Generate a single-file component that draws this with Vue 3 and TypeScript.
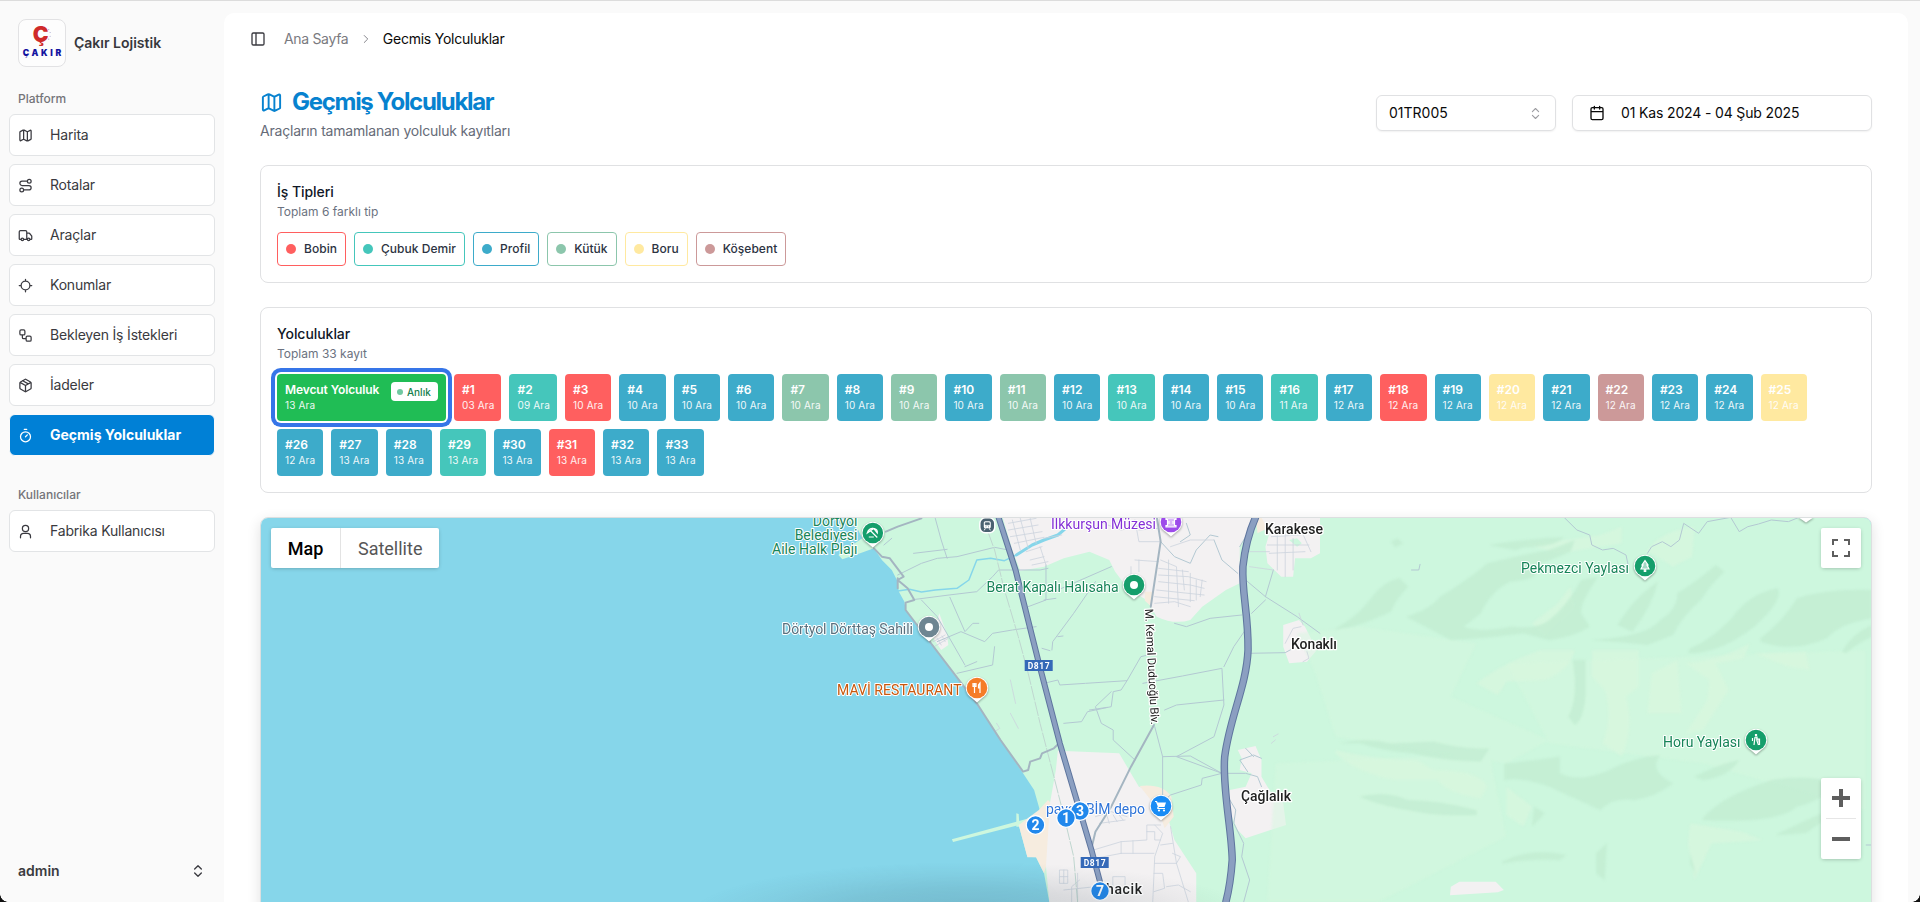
<script setup lang="ts">
interface NavItem { label: string; icon: string; active?: boolean }
interface JobType { name: string; color: string }
interface Trip { no: number; date: string; color: string }
interface Place { x: number; y: number; color: string; text: string; label: string; width: number; labelX: number; icon: string }

const icons: Record<string, string> = {
  map: 'M14.106 5.553a2 2 0 0 0 1.788 0l3.659-1.83A1 1 0 0 1 21 4.619v12.764a1 1 0 0 1-.553.894l-4.553 2.277a2 2 0 0 1-1.788 0l-4.212-2.106a2 2 0 0 0-1.788 0l-3.659 1.83A1 1 0 0 1 3 19.381V6.618a1 1 0 0 1 .553-.894l4.553-2.277a2 2 0 0 1 1.788 0zM15 5.764v15M9 3.236v15',
  route: 'M9 19a3 3 0 1 1-6 0a3 3 0 1 1 6 0M9 19h8.5a3.5 3.5 0 0 0 0-7h-11a3.5 3.5 0 0 1 0-7H15M21 5a3 3 0 1 1-6 0a3 3 0 1 1 6 0',
  truck: 'M14 18V6a2 2 0 0 0-2-2H4a2 2 0 0 0-2 2v11a1 1 0 0 0 1 1h2M15 18H9M19 18h2a1 1 0 0 0 1-1v-3.65a1 1 0 0 0-.22-.624l-3.48-4.35A1 1 0 0 0 17.52 8H14M19 18a2 2 0 1 1-4 0a2 2 0 1 1 4 0M9 18a2 2 0 1 1-4 0a2 2 0 1 1 4 0',
  locate: 'M2 12h3M19 12h3M12 2v3M12 19v3M19 12a7 7 0 1 1-14 0a7 7 0 1 1 14 0',
  workflow: 'M5 3h4a2 2 0 0 1 2 2v4a2 2 0 0 1-2 2H5a2 2 0 0 1-2-2V5a2 2 0 0 1 2-2zM7 11v4a2 2 0 0 0 2 2h4M15 13h4a2 2 0 0 1 2 2v4a2 2 0 0 1-2 2h-4a2 2 0 0 1-2-2v-4a2 2 0 0 1 2-2z',
  box: 'M11 21.73a2 2 0 0 0 2 0l7-4A2 2 0 0 0 21 16V8a2 2 0 0 0-1-1.73l-7-4a2 2 0 0 0-2 0l-7 4A2 2 0 0 0 3 8v8a2 2 0 0 0 1 1.73zM12 22V12M3.3 7L12 12l8.7-5M7.5 4.27l9 5.15',
  timer: 'M10 2h4M12 14l3-3M20 14a8 8 0 1 1-16 0a8 8 0 1 1 16 0',
  user: 'M17 7a5 5 0 1 1-10 0a5 5 0 1 1 10 0M20 22v-2a5 5 0 0 0-5-5H9a5 5 0 0 0-5 5v2',
  panel: 'M5 3h14a2 2 0 0 1 2 2v14a2 2 0 0 1-2 2H5a2 2 0 0 1-2-2V5a2 2 0 0 1 2-2zM9 3v18',
  chevron: 'm9 18 6-6-6-6',
  upDown: 'm7 15 5 5 5-5M7 9l5-5 5 5',
  calendar: 'M8 2v4M16 2v4M5 4h14a2 2 0 0 1 2 2v14a2 2 0 0 1-2 2H5a2 2 0 0 1-2-2V6a2 2 0 0 1 2-2zM3 10h18',
}

const platform: NavItem[] = [
  { label: 'Harita', icon: 'map' },
  { label: 'Rotalar', icon: 'route' },
  { label: 'Araçlar', icon: 'truck' },
  { label: 'Konumlar', icon: 'locate' },
  { label: 'Bekleyen İş İstekleri', icon: 'workflow' },
  { label: 'İadeler', icon: 'box' },
  { label: 'Geçmiş Yolculuklar', icon: 'timer', active: true },
]

const red = '#ff5f5f'
const teal = '#45c6bb'
const blue = '#3dabca'
const green = '#8cc6ac'
const yellow = '#ffe9a0'
const rose = '#cc9999'

const jobTypes: JobType[] = [
  { name: 'Bobin', color: red },
  { name: 'Çubuk Demir', color: teal },
  { name: 'Profil', color: blue },
  { name: 'Kütük', color: green },
  { name: 'Boru', color: yellow },
  { name: 'Köşebent', color: rose },
]

const special: Record<number, string> = {
  1: red, 2: teal, 3: red, 7: green, 9: green, 11: green, 13: teal, 16: teal,
  18: red, 20: yellow, 22: rose, 25: yellow, 29: teal, 31: red,
}
function dateOf(n: number): string {
  if (n === 1) return '03 Ara'
  if (n === 2) return '09 Ara'
  if (n <= 15) return '10 Ara'
  if (n === 16) return '11 Ara'
  return n <= 26 ? '12 Ara' : '13 Ara'
}
const trips: Trip[] = Array.from({ length: 33 }, (_, i) => ({
  no: i + 1, date: dateOf(i + 1), color: special[i + 1] ?? blue,
}))

const places: Place[] = [
  { x: 1171, y: 522, color: '#9d4bea', text: '#8430d6', label: 'İlkkurşun Müzesi', width: 105, labelX: 1156, icon: 'M-5-4h10v1.500h-1.500v6h1.500v1.500h-10v-1.500h1.500v-6h-1.500zM-2-1v3M2-1v3' },
  { x: 1134, y: 585, color: '#159e6b', text: '#168458', label: 'Berat Kapalı Halısaha', width: 132, labelX: 1118.500, icon: 'dot' },
  { x: 929, y: 627, color: '#6e8592', text: '#58707e', label: 'Dörtyol Dörttaş Sahili', width: 131, labelX: 913, icon: 'dot' },
  { x: 977, y: 688, color: '#f57c28', text: '#c9580e', label: 'MAVİ RESTAURANT', width: 124.500, labelX: 961.500, icon: 'M-4-5v3.500h3V-5M-2.500-5V5M3 5V0h-1.500v-3l1.500-2z' },
  { x: 1645, y: 566, color: '#159e6b', text: '#168458', label: 'Pekmezci Yaylası', width: 108, labelX: 1629, icon: 'M0-5.500L3-1H2L4 3H.700v2.500H-.700V3H-4l2-4h-1z' },
  { x: 1756, y: 740, color: '#159e6b', text: '#168458', label: 'Horu Yaylası', width: 77.500, labelX: 1740.500, icon: 'M-.500-5.500h1v1h-1zM-1-3h2v4l1.500 4M-1-3l-1 8M-3.500-2v3M1-1h2.500v6' },
]

const stops = [
  { n: 3, x: 1080, y: 811 },
  { n: 2, x: 1035.5, y: 825 },
  { n: 1, x: 1066, y: 818 },
  { n: 7, x: 1100, y: 891 },
]

const towns = [
  { x: 1294, y: 534, w: 58, name: 'Karakese' },
  { x: 1314, y: 649, w: 46, name: 'Konaklı' },
  { x: 1266, y: 801, w: 50, name: 'Çağlalık' },
  { x: 1124, y: 894, w: 36, name: 'hacik' },
]

const minorRoads: string[] = [
  'M465 105L485 85M500 195L560 160L600 145L650 140L745 112L780 120M540 130L625 118M595 25L610 90L625 145',
  'M545 268L630 255L700 245L740 200L755 180L860 180L880 175M632 262L670 365L690 340L705 340M560 270L600 320L670 465M600 395L660 365L720 395L740 370L790 360L850 350',
  'M650 490L740 465L745 410M670 470L700 455M875 165L875 270L830 290M870 270L900 265M880 245L905 240L1040 170',
  'M870 520L905 510L910 525L975 520L1080 512L1115 440L1150 430M1080 512L1065 540L1045 545L1040 590L980 605L965 635L920 640M985 600L1030 592',
  'M1040 545L1000 590L1015 640L1045 660L1045 690L1100 750M1120 520L1220 498L1320 475L1325 585L1300 680L1205 740L1320 790',
  'M1150 650L1170 740L1170 870M1170 740L1240 738L1320 790L1270 805L1268 825L1190 855L1175 870',
  'M890 420L892 395L945 310L1000 215M905 380L918 378M865 415L885 422M1175 600L1205 585L1325 570M1200 340L1230 350L1290 325L1370 315',
  'M1375 205L1430 260L1510 320L1568 370M1430 270L1395 310M1385 430L1480 428L1500 415M1325 470L1350 410L1385 350M1430 260L1450 180',
  'M1165 95L1200 140L1240 160L1255 120L1290 75L1310 80M1230 40L1240 75L1215 95M1300 90L1320 150L1360 190M1365 110L1390 60',
  'M1320 790L1380 790L1410 800L1420 830M1385 785L1365 750L1400 735L1420 745M1380 715L1400 740M1330 850L1355 900L1350 940L1375 1000L1370 1040L1390 1110L1375 1176',
]

const streets: string[] = [
  'M780 40L850 25M780 60L855 45M785 80L865 65M795 100L870 82M790 30L810 120M810 25L830 115M835 25L850 100M870 85L915 75M825 125L865 110M835 150L870 140M840 165L880 155M860 110L875 165',
  'M910 1080H930V1120H910ZM920 1080V1120M910 1100H930M1045 1100H1075V1135H1045ZM940 1176V1130L960 1110M920 1140L1000 1130L1030 1145M955 1090V1176',
  'M995 1020L1065 995L1130 990V945H1165M1065 995V1030M1095 992V1030M1065 1030L1148 1030M1000 1045L1065 1030M1130 965H1150V990H1165M1150 945L1170 970L1150 1040L1145 1176M1190 950L1205 1060L1235 1176M1165 1005L1195 1000M1150 1060H1205M1205 1060L1215 1040L1195 1030M1148 1090L1170 1090L1175 1135L1148 1145M1180 1130L1210 1125L1240 1145',
  'M1000 920L1040 905L1080 920M1010 940L1075 930M1030 920L1035 940M1045 915L1055 935M1060 915L1070 930',
  'M1165 150L1205 170L1210 290M1185 150V280M1220 180L1225 240M1160 175L1235 185M1160 195L1235 200L1280 215M1160 215L1240 225L1275 235M1155 240L1275 255M1150 260L1250 272M1240 190V275M1255 210V270M1270 210L1265 260M1150 280L1200 275L1240 290',
  'M1100 150L1160 155M1090 170V195M1110 150V185M1100 30L1110 95L1165 95M1110 60L1160 55M1190 110L1240 90L1300 90M1020 40L1065 60L1110 50',
  'M1445 80L1520 75M1435 105H1540M1440 130L1530 125M1460 60V180M1480 60V200M1500 85V180M1520 60L1545 125M1375 125H1440M1390 170L1450 180',
  'M590 395L620 375M595 408L628 385M600 385L610 405M612 378L620 395M750 640L758 655L745 665M785 610L805 655M785 510L798 580',
  'M1515 310L1525 345M1480 400L1500 355L1520 350M1535 425L1540 445L1525 455M1450 680L1462 672M1445 700L1455 690',
]

const darkHills: string[] = [
  'M195 360Q250 320 280 270Q310 215 350 205L370 230Q340 270 330 305Q270 340 240 350Z',
  'M330 95L345 85L358 100L340 112ZM560 105Q650 85 735 82Q715 110 640 112L620 120Z',
  'M365 320Q420 300 445 260Q520 200 555 160Q650 130 700 120L760 90L750 125Q690 160 650 170Q700 205 610 215Q565 240 540 310L500 350Q540 370 610 350Q670 360 700 330Q740 290 775 210L815 200Q760 300 780 320L795 350Q760 380 700 390L640 370Q550 385 470 390Q410 350 365 320Z',
  'M860 345Q900 260 955 215Q940 290 895 365ZM800 390Q930 380 960 330Q1000 300 1000 250Q1050 210 1090 165L1110 185Q1080 220 1055 270Q1010 320 990 375L930 405Q860 395 800 390Z',
  'M1030 415Q1080 390 1130 320Q1170 250 1235 235Q1250 270 1180 350Q1100 430 1025 430Z',
  'M1195 385Q1250 330 1280 265Q1350 235 1455 240V325Q1380 340 1350 385Q1270 430 1195 395ZM1385 425Q1410 370 1455 345V380Q1420 400 1395 430Z',
  'M755 450H785V560Q780 630 760 645L745 620Q770 560 755 450Z',
  'M210 700Q270 680 330 700L430 695Q500 720 560 715L540 755Q440 750 380 730Q300 720 260 700Z',
  'M595 760Q680 750 725 740L725 790Q770 820 840 780Q900 740 960 735Q930 780 990 820Q950 860 900 870Q850 860 820 900L700 830Q640 800 595 810ZM1040 800Q1100 760 1145 750Q1120 800 1060 810Z',
  'M255 860Q320 840 370 870Q440 870 530 900L530 915Q440 920 390 905Q310 890 255 860ZM660 950L665 890L690 910Z',
  'M1060 925Q1100 860 1220 810Q1320 790 1370 825Q1340 870 1280 890Q1240 940 1060 930ZM1230 975Q1330 910 1400 880L1300 970Z',
  'M590 1055Q660 1010 740 1035L725 1050Q660 1045 590 1060ZM810 1030L835 1000L830 1110L810 1090ZM1030 1030L1045 1100L1030 1060Z',
]
const lightHills: string[] = [
  'M530 520Q590 460 680 420L760 420Q750 480 690 510L600 515L580 555Z',
  'M800 420H910V530L880 560Q900 650 870 740L825 700Q850 620 830 540L800 500ZM940 490L1000 450L1010 610L930 610Z',
  'M1020 460Q1100 450 1170 400L1155 445L1090 460L1120 540L1060 660L1020 670L1070 570L1075 510Z',
  'M925 130Q960 60 1040 50L1035 140L990 170L940 130ZM640 100L740 90L820 75L870 50V100L720 130Z',
  'M200 720Q300 750 390 750L430 780Q540 780 555 830L540 865Q460 850 440 810L340 810Q250 790 200 730ZM600 830L660 890L640 950L600 915Z',
  'M1180 430L1300 425L1310 480L1260 470ZM1030 940L1150 965L1200 990L1080 1000L1040 1110L1025 1000ZM660 340L720 280L750 230L760 290L690 380Z',
]
</script>

<template>
  <div class="shell">
    <aside class="sidebar">
      <div class="brand">
        <svg class="logo" viewBox="0 0 48 48">
          <text x="22.500" y="22.500" class="logo-c">Ç</text>
          <g fill="#a9a9cf"><circle cx="31" cy="10" r=".6" /><circle cx="32.500" cy="13" r=".6" /><circle cx="32.500" cy="17" r=".6" /><circle cx="31" cy="20" r=".6" /></g>
          <text x="24" y="37.500" class="logo-name" textLength="40">ÇAKIR</text>
        </svg>
        <span class="brand-name">Çakır Lojistik</span>
      </div>
      <div class="group-label">Platform</div>
      <nav class="nav">
        <a v-for="item in platform" :key="item.label" class="nav-item" :class="{ active: item.active }">
          <svg class="icon" viewBox="0 0 24 24"><path :d="icons[item.icon]" /></svg>
          <span>{{ item.label }}</span>
        </a>
      </nav>
      <div class="group-label users">Kullanıcılar</div>
      <nav class="nav">
        <a class="nav-item">
          <svg class="icon" viewBox="0 0 24 24"><path :d="icons.user" /></svg>
          <span>Fabrika Kullanıcısı</span>
        </a>
      </nav>
      <div class="account">
        <span>admin</span>
        <svg class="icon" viewBox="0 0 24 24"><path :d="icons.upDown" /></svg>
      </div>
    </aside>

    <main class="inset">
      <header class="crumbs">
        <svg class="icon" viewBox="0 0 24 24"><path :d="icons.panel" /></svg>
        <span class="crumb-home">Ana Sayfa</span>
        <svg class="icon sep" viewBox="0 0 24 24"><path :d="icons.chevron" /></svg>
        <span class="crumb-here">Gecmis Yolculuklar</span>
      </header>

      <section class="heading">
        <div>
          <h1>
            <svg class="icon" viewBox="0 0 24 24"><path :d="icons.map" /></svg>
            <span>Geçmiş Yolculuklar</span>
          </h1>
          <p>Araçların tamamlanan yolculuk kayıtları</p>
        </div>
        <div class="filters">
          <button class="field select">
            <span>01TR005</span>
            <svg class="icon" viewBox="0 0 24 24"><path :d="icons.upDown" /></svg>
          </button>
          <button class="field range">
            <svg class="icon" viewBox="0 0 24 24"><path :d="icons.calendar" /></svg>
            <span>01 Kas 2024 - 04 Şub 2025</span>
          </button>
        </div>
      </section>

      <section class="card types">
        <h2>İş Tipleri</h2>
        <p>Toplam 6 farklı tip</p>
        <div class="chips">
          <span v-for="t in jobTypes" :key="t.name" class="chip" :style="{ borderColor: t.color }">
            <i :style="{ background: t.color }"></i>{{ t.name }}
          </span>
        </div>
      </section>

      <section class="card journeys">
        <h2>Yolculuklar</h2>
        <p>Toplam 33 kayıt</p>
        <div class="tiles">
          <div class="tile current">
            <div>
              <b>Mevcut Yolculuk</b>
              <small>13 Ara</small>
            </div>
            <span class="live"><i></i>Anlık</span>
          </div>
          <div v-for="t in trips" :key="t.no" class="tile" :style="{ background: t.color }">
            <b>#{{ t.no }}</b>
            <small>{{ t.date }}</small>
          </div>
        </div>
      </section>

      <section class="map-card">
        <svg class="map" viewBox="261 518 1610 384" preserveAspectRatio="xMinYMin slice">
          <defs>
            <radialGradient id="shade">
              <stop offset="0" stop-color="#2a4250" stop-opacity=".2" />
              <stop offset=".5" stop-color="#2a4250" stop-opacity=".12" />
              <stop offset=".8" stop-color="#2a4250" stop-opacity=".04" />
              <stop offset="1" stop-color="#2a4250" stop-opacity="0" />
            </radialGradient>
          </defs>
          <rect x="261" y="518" width="1610" height="384" fill="#86d6ea" />
          <g class="geo" transform="translate(700 510) scale(.39541 .33333)">
            <path fill="#cdf7de" d="M370 20L400 60L410 85L350 135L360 148L405 130L440 115L460 150L485 180L498 210L503 245L517 275L520 300L560 365L590 410L640 490L700 580L760 690L817 790L845 840L857 890L862 915L800 935L637 988L640 996L806 945L828 1040L850 1042L870 1090L884 1180H3000V20Z" />
            <path fill="#cdf7de" d="M800 910L806 912L808 950H800Z" />
            <path fill="#f6ecdf" d="M857 900L880 870L905 900L880 1050L870 1090L850 1042L828 1042L815 985L806 945Z" />
            <path fill="#f3f1f2" d="M905 722L1060 730L1110 830L1165 850L1185 930L1200 990L1255 1090V1180H884L875 1070L885 880L900 780Z" />
            <path fill="#f6ecdf" d="M1112 828Q1170 820 1192 860L1198 920L1175 955L1160 900Z" />
            <path fill="#f3f1f2" d="M765 20H1400L1390 60L1365 110V220L1330 240L1270 290L1240 330Q1200 345 1155 320L1130 270L1085 240L1050 185L1035 150L985 125L920 145L870 170L810 182L790 120Z" />
            <path fill="#f6ecdf" d="M1125 245L1145 245L1142 290L1125 272ZM1405 20H1435V55L1410 70Z" />
            <path fill="#f3f1f2" d="M1420 22H1568V130L1545 145L1505 145L1500 200L1470 200L1435 160L1430 110L1440 70ZM1475 345L1515 330L1530 350L1560 420L1535 455L1490 460L1475 410ZM1360 720L1405 708L1420 750V800L1445 850L1475 880L1482 945L1380 985L1360 960L1330 880L1340 840L1380 830L1395 790L1365 780L1370 745ZM590 385L605 310L625 375L628 405L610 420Z" />
            <path fill="#cdf7de" d="M1490 90L1510 85L1522 100L1510 110Z" />
          </g>
          <g class="geo" transform="translate(1250 510) scale(.4273 .33333)">
            <g class="terrain">
              <path fill="#d5f7df" opacity=".5" d="M110 370L260 350L530 400L470 560L700 690L600 760L200 680L150 480ZM600 460L1440 420V900L1060 760L700 700ZM60 760L560 730L600 980L300 1176H40Z" />
              <path v-for="(d, i) in lightHills" :key="'l' + i" :d="d" fill="#d9f7de" opacity=".7" />
              <path v-for="(d, i) in darkHills" :key="'d' + i" :d="d" fill="#c3edd2" opacity=".85" />
            </g>
            <path fill="#f3f1f2" d="M470 1130L490 1115H575L594 1140L580 1147L468 1156Z" />
            <path class="minor" d="M735 22L765 60L795 75L800 105L825 120L850 115L880 135L885 165M930 130L940 110L965 95L985 110L1005 90L1015 40L1050 70L1070 35L1125 22L1145 65L1165 50L1190 42L1220 30L1260 35L1285 22M378 180H395L398 163M1442 1005H1453" />
          </g>
          <g class="geo" transform="translate(700 510) scale(.39541 .33333)">
            <path class="river" stroke-width="3" d="M925 55L905 75L870 90L840 105L800 135" />
            <path class="river" stroke-width="1.500" d="M800 135L770 152L735 145L700 150L690 180L680 210L650 235L595 240L560 246L530 238L500 243" />
            <path v-for="(d, i) in minorRoads" :key="'m' + i" class="minor" :d="d" />
            <path v-for="(d, i) in streets" :key="'s' + i" class="street" :d="d" />
            <path class="rail" d="M715 22L745 120L770 240L805 380L830 490L860 640L895 800L925 940L945 1040L955 1176" />
            <path class="coast" d="M440 115L460 140L480 145L515 200L500 210L525 235L542 270L520 278V300L700 580L760 690L817 785L830 780L835 755L860 745L865 730L895 715L908 700M470 65L500 50L560 25M500 205V235" />
            <path class="coast" d="M1155 20L1165 95L1140 290M1148 645L1090 770L1040 890L1000 965L992 1005" />
            <path class="highway-edge" d="M755 22L798 180L855 450L910 700L950 860L990 1020L1015 1130" stroke-width="6" />
            <path class="highway" d="M755 22L798 180L855 450L910 700L950 860L990 1020L1015 1130" stroke-width="4" />
            <path class="highway-edge" d="M1405 22Q1380 90 1373 170C1370 250 1387 310 1386 420C1382 530 1340 620 1327 740C1320 830 1345 960 1346 1050Q1342 1120 1330 1176" stroke-width="7.500" />
            <path class="highway" d="M1405 22Q1380 90 1373 170C1370 250 1387 310 1386 420C1382 530 1340 620 1327 740C1320 830 1345 960 1346 1050Q1342 1120 1330 1176" stroke-width="5.500" />
          </g>

          <g v-for="(s, i) in [[1038.700, 665.500], [1094.700, 862.500]]" :key="'r' + i">
            <rect :x="s[0] - 14" :y="s[1] - 5.500" width="28" height="11" fill="#3569b8" />
            <text :x="s[0]" :y="s[1] + 3.200" class="shield" textLength="22">D817</text>
          </g>

          <g transform="translate(987.300 525.300)">
            <rect x="-7.500" y="-7.500" width="15" height="15" rx="5.500" fill="#4a6170" stroke="#fff" stroke-width="1.500" />
            <rect x="-3.500" y="-4" width="7" height="7" rx="1.500" fill="#fff" />
            <path d="M-2-2.500h4v2h-4zM-1.700 1.500h.800M.900 1.500h.800" fill="#4a6170" stroke="#4a6170" stroke-width=".8" />
            <path d="M-2 3l-1 2M2 3l1 2" stroke="#fff" />
          </g>

          <text class="place" fill="#168458" x="857.500" y="526">Dörtyol</text>
          <text class="place" fill="#168458" x="857.500" y="540">Belediyesi</text>
          <text class="place" fill="#168458" x="857.500" y="554" textLength="85.500">Aile Halk Plajı</text>
          <g transform="translate(872.800 533)">
            <path class="pin" d="M0 14.500L-5.500 9.800A11.200 11.200 0 1 1 5.500 9.800Z" />
            <circle r="10.300" fill="#159e6b" />
            <path class="glyph" d="M-5.500 0Q-4-5 1-4.500ZM-2-2L4.500 4.500M1-4.500Q5-4 4.500 0ZM-4 4h5" />
          </g>

          <g v-for="p in places" :key="p.label">
            <text class="place" :x="p.labelX" :y="p.y + 7" :fill="p.text" :textLength="p.width">{{ p.label }}</text>
            <g :transform="`translate(${p.x} ${p.y})`">
              <path class="pin" d="M0 14.500L-5.500 9.800A11.200 11.200 0 1 1 5.500 9.800Z" />
              <circle r="10.300" :fill="p.color" />
              <circle v-if="p.icon === 'dot'" r="4" fill="#fff" />
              <path v-else class="glyph" :d="p.icon" />
            </g>
          </g>
          <path class="pin" d="M1798 517L1806 522.500L1814 517Z" />

          <text class="place" fill="#2f74d8" x="1145" y="813.500" textLength="99">payas BİM depo</text>
          <g transform="translate(1161 806)">
            <path class="pin" d="M0 14.500L-5.500 9.800A11.200 11.200 0 1 1 5.500 9.800Z" />
            <circle r="10.300" fill="#1a8cf5" />
            <path fill="#fff" d="M-6-5h2l.600 1.500H5L3.500 1H-2l-.500 1H4v1H-3.500l-.500-1 .800-1.500L-5-4h-1z" />
            <circle cx="-2" cy="4.500" r="1.100" fill="#fff" /><circle cx="3" cy="4.500" r="1.100" fill="#fff" />
          </g>

          <text class="street-name" transform="translate(1145 609) rotate(87)" textLength="116">M. Kemal Duduoğlu Blv.</text>
          <text v-for="t in towns" :key="t.name" class="town" :x="t.x" :y="t.y" :textLength="t.w">{{ t.name }}</text>

          <g v-for="s in stops" :key="s.n">
            <circle :cx="s.x" :cy="s.y" r="9.300" fill="#2188ec" stroke="#fff" stroke-width="1.300" />
            <text :x="s.x" :y="s.y + 5" class="stop">{{ s.n }}</text>
          </g>
          <ellipse cx="970" cy="914" rx="280" ry="52" fill="url(#shade)" />
        </svg>

        <div class="map-types">
          <button class="on">Map</button>
          <button>Satellite</button>
        </div>
        <div class="full">
          <svg viewBox="0 0 18 18"><path d="M0 0v6h2V2h4V0zM16 0h-4v2h4v4h2V0zM16 16h-4v2h6v-6h-2zM2 12H0v6h6v-2H2z" /></svg>
        </div>
        <div class="zoom">
          <svg viewBox="0 0 18 18"><path d="M18 7h-7V0H7v7H0v4h7v7h4v-7h7z" /></svg>
          <hr />
          <svg viewBox="0 0 18 18"><path d="M0 7h18v4H0z" /></svg>
        </div>
      </section>
    </main>
    <i class="corner left"></i>
    <i class="corner right"></i>
  </div>
</template>

<style>
html, body { overflow: hidden; background: #fafafa; }
</style>

<style scoped>
* { box-sizing: border-box; }
.shell {
  position: relative; display: flex; width: 1920px; height: 902px; overflow: hidden;
  background: #fafafa; border-top: 1px solid #dcdcdc; padding-right: 12px;
  font-family: Inter, "Noto Sans", sans-serif; color: #0a0a0a; font-size: 14px;
}
button { font: inherit; color: inherit; }
h1, h2, p { margin: 0; }
.icon { width: 16px; height: 16px; fill: none; stroke: currentColor; stroke-width: 2; stroke-linecap: round; stroke-linejoin: round; flex: none; display: block; }

.sidebar { width: 224px; flex: none; display: flex; flex-direction: column; padding: 18px 9px 13px; color: #3f3f46; }
.brand { display: flex; align-items: center; gap: 8px; padding-left: 9px; height: 48px; }
.logo { width: 48px; height: 48px; border: 1px solid #e2e2e4; border-radius: 8px; background: #fdfdfd; flex: none; }
.logo-c { font: 900 22px Inter, sans-serif; fill: #cf2a2a; text-anchor: middle; }
.logo-name { font: 900 9px Inter, sans-serif; fill: #1414a0; text-anchor: middle; }
.brand-name { font-weight: 600; color: #37373c; padding-bottom: 1px; }
.group-label { font-size: 12px; font-weight: 500; color: #747479; height: 32px; display: flex; align-items: center; padding-left: 9px; margin-top: 15px; }
.group-label.users { margin-top: 22px; }
.nav { display: flex; flex-direction: column; gap: 8px; }
.nav-item {
  height: 42px; display: flex; align-items: center; gap: 17px; padding-left: 8px;
  background: #fff; border: 1px solid #e2e4e6; border-radius: 6px; color: #3a3a40; letter-spacing: -0.19px;
}
.nav-item .icon { width: 15px; height: 15px; }
.nav-item span { padding-bottom: 1px; }
.nav-item.active { background: #0080d6; color: #fff; font-weight: 700; border-color: #fafafa; letter-spacing: 0; }
.account { margin-top: auto; height: 36px; display: flex; align-items: center; justify-content: space-between; padding: 0 9px; font-weight: 600; color: #3a3a40; }
.account span { padding-bottom: 1px; }

.inset { position: relative; flex: 1; margin-top: 12px; background: #fff; border-radius: 10px 10px 0 0; padding: 0 36px; overflow: hidden; }
.crumbs { display: flex; align-items: center; height: 52px; margin-left: -10px; color: #3a3a40; }
.crumbs span { padding-bottom: 1px; }
.crumb-home { color: #7a7a80; margin-left: 18px; letter-spacing: -0.33px; }
.sep { width: 14px; height: 14px; margin: 0 9.5px 0 11px; color: #85858b; stroke-width: 1.7; }
.crumb-here { color: #0a0a0a; letter-spacing: -0.24px; }

.heading { display: flex; justify-content: space-between; align-items: flex-start; height: 100px; padding-top: 21px; }
h1 { display: flex; align-items: center; gap: 8px; font-size: 24px; line-height: 32px; font-weight: 700; letter-spacing: -1.3px; color: #0782cf; }
h1 .icon { width: 23px; height: 23px; margin-right: 1px; }
.heading p { font-size: 14px; line-height: 20px; color: #666b78; margin-top: 3px; letter-spacing: -0.2px; }
.filters { display: flex; gap: 16px; padding-top: 9px; }
.field { height: 36px; display: flex; align-items: center; background: #fff; border: 1px solid #e0e1e3; border-radius: 6px; box-shadow: 0 1px 2px rgba(0, 0, 0, .06); }
.field span { padding-bottom: 1px; }
.select { width: 180px; justify-content: space-between; padding: 0 12px; }
.select .icon { color: #9c9ca1; width: 15px; height: 15px; stroke-width: 1.7; }
.range { width: 300px; gap: 16px; padding: 0 16px; letter-spacing: -0.15px; }

.card { border: 1px solid #e0e1e3; border-radius: 8px; padding: 16px 16px 0; background: #fff; }
.types { height: 118px; }
.journeys { height: 186px; margin-top: 24px; }
h2 { font-size: 14px; line-height: 20px; font-weight: 500; color: #111827; letter-spacing: -0.05px; }
.card p { font-size: 12px; line-height: 16px; color: #6b7280; margin-top: 2px; }
.chips { display: flex; gap: 8px; margin-top: 12px; }
.chip { height: 34px; display: flex; align-items: center; gap: 8px; padding: 0 8px 1px; border: 1px solid; border-radius: 4px; font-size: 12px; font-weight: 500; color: #2c3342; letter-spacing: 0.04px; }
.chip i { width: 10px; height: 10px; border-radius: 50%; }
.tiles { display: flex; flex-wrap: wrap; gap: 8px; margin-top: 12px; }
.tile { min-width: 46.35px; height: 47px; padding: 8px 7px 8px 8px; border-radius: 4px; color: #fff; background: #20bd55; white-space: nowrap; }
.tile b { display: block; font-size: 12px; line-height: 16px; font-weight: 600; }
.tile small { display: block; font-size: 10px; line-height: 15px; letter-spacing: 0.15px; opacity: .92; }
.current { display: flex; justify-content: space-between; width: 169px; padding-right: 8px; box-shadow: 0 0 0 2px #fff, 0 0 0 6px #3675e8; }
.current b { letter-spacing: -0.1px; }
.live { display: flex; align-items: center; gap: 4px; width: 47px; height: 19px; padding: 0 6px; border-radius: 4px; background: #fff; color: #15804c; font-size: 10px; font-weight: 500; }
.live i { width: 6px; height: 6px; border-radius: 50%; background: #70c8a1; flex: none; }

.map-card { position: relative; height: 420px; margin-top: 24px; border: 1px solid #dcdfe0; border-radius: 8px; overflow: hidden; box-shadow: 0 4px 14px rgba(0, 0, 0, .12); }
.map { display: block; width: 1610px; height: 384px; font-family: Roboto, sans-serif; }
.geo path { vector-effect: non-scaling-stroke; stroke-linejoin: round; stroke-linecap: round; }
.terrain { filter: blur(3px); }
.minor, .street, .rail, .coast, .river, .highway, .highway-edge { fill: none; }
.minor { stroke: #b3c8d2; stroke-width: 1; }
.street { stroke: #ccd3dd; stroke-width: .8; }
.rail { stroke: #bfd6cf; stroke-width: 1; stroke-dasharray: 14 2; }
.coast { stroke: #a4b5c1; stroke-width: 2; }
.river { stroke: #86d6ea; }
.highway-edge { stroke: #5e759e; }
.highway { stroke: #8b9fc1; }
.shield { font: 700 8.5px Roboto, sans-serif; fill: #fff; text-anchor: middle; }
.place { font-size: 14px; text-anchor: end; stroke: #fff; stroke-width: 2px; paint-order: stroke; stroke-linejoin: round; }
.town { font-size: 14px; font-weight: 500; text-anchor: middle; fill: #222; stroke: #fff; stroke-width: 2.5px; paint-order: stroke; stroke-linejoin: round; }
.street-name { font-size: 11.5px; fill: #222; stroke: #fff; stroke-width: 2.5px; paint-order: stroke; stroke-linejoin: round; }
.pin { fill: #fff; filter: drop-shadow(0 1px 1px rgba(0, 0, 0, .35)); }
.glyph { stroke: #fff; stroke-width: 1.2; fill: rgba(255, 255, 255, .6); }
.stop { font: 700 14px Roboto, sans-serif; fill: #fff; text-anchor: middle; }

.map-types { position: absolute; left: 10px; top: 10px; display: flex; height: 40px; font-family: Roboto, sans-serif; font-size: 18px; background: #fff; border-radius: 2px; box-shadow: 0 1px 4px -1px rgba(0, 0, 0, .3); }
.map-types button { border: 0; padding: 0 16.8px; background: none; color: #565656; }
.map-types button.on { color: #000; font-weight: 500; border-right: 1px solid #e3e3e3; }
.full, .zoom { position: absolute; right: 10px; width: 40px; background: #fff; border-radius: 2px; box-shadow: 0 1px 4px -1px rgba(0, 0, 0, .3); display: flex; flex-direction: column; align-items: center; }
.full { top: 10px; height: 40px; justify-content: center; }
.full svg, .zoom svg { width: 18px; height: 18px; fill: #5e5e5e; }
.zoom { top: 260px; height: 81px; justify-content: space-between; padding: 11px 0; }
.zoom hr { width: 30px; height: 1px; border: 0; margin: 0; background: #e6e6e6; }

.corner { position: absolute; bottom: 0; width: 8px; height: 8px; }
.corner.left { left: 0; background: radial-gradient(circle at 100% 0, transparent 7.5px, #111 8px); }
.corner.right { right: 0; background: radial-gradient(circle at 0 0, transparent 7.5px, #111 8px); }
</style>
